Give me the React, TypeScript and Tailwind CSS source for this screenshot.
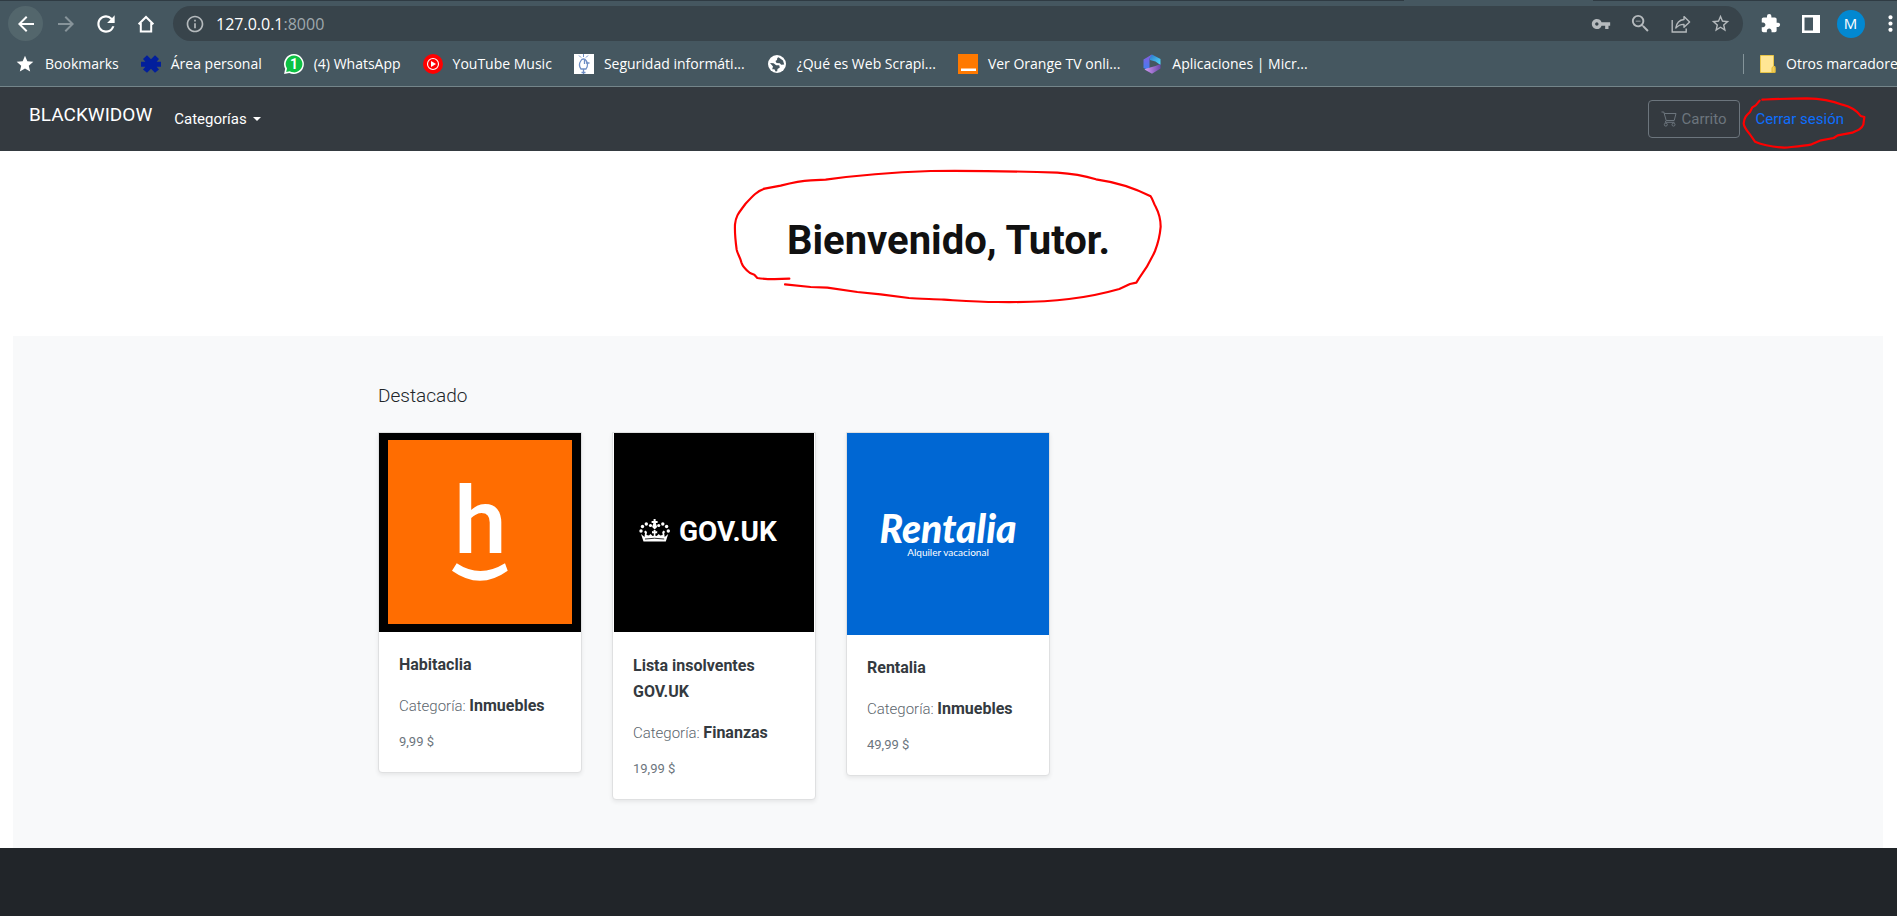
import type { ReactNode } from "react";
import {
  MdArrowBack,
  MdArrowForward,
  MdExtension,
  MdInfoOutline,
  MdMoreVert,
  MdRefresh,
  MdStar,
  MdStarBorder,
  MdVpnKey,
  MdZoomOut,
} from "react-icons/md";

/* ---------- Browser icons ---------- */

const HomeIcon = () => (
  <svg viewBox="0 0 18 18" className="h-[18px] w-[18px]" fill="none" stroke="currentColor" strokeWidth="2">
    <path d="M1.6 9.3 9 2l7.4 7.3M3.8 8v8.4h10.4V8" />
  </svg>
);

const ShareIcon = () => (
  <svg viewBox="0 0 20 18" className="h-[18px] w-5" fill="none" stroke="currentColor" strokeWidth="1.4">
    <path d="M1.2 5v12h14v-3.4" />
    <path d="M13 1.6 18.6 7 13 12.2V9.4C9.600 9.300 7 10.600 4.800 13 5.500 8.400 8.300 5 13 4.500Z" strokeLinejoin="round" />
  </svg>
);

const PanelIcon = () => (
  <svg viewBox="0 0 18 18" className="h-[18px] w-[18px]">
    <path fill="#fff" fillRule="evenodd" d="M0 0h18v18H0zM2.500 2.500v13H11v-13z" />
  </svg>
);

/* ---------- Bookmark icons ---------- */

const StarMark = () => <MdStar className="h-5 w-5 text-white" />;

const CampusMark = () => (
  <svg viewBox="0 0 20 20" className="h-5 w-5">
    <path
      fill="#021f9c"
      d="m2 5 4-3.800 4 4 4-4L18 5l-2.400 2.800H20v5h-4.400L18 15.600l-4 3.200-4-4-4 4-4-3.200 2.400-2.800H0v-5h4.400z"
    />
  </svg>
);

const WhatsAppMark = () => (
  <svg viewBox="0 0 20 20" className="h-5 w-5">
    <path fill="#fff" d="M10 0a10 10 0 1 1-4.700 18.900L.1 20l1.100-5.200A10 10 0 0 1 10 0z" />
    <path fill="#0dc143" d="M10 1.600a8.400 8.400 0 1 1-4.300 15.600l-3.500.700.800-3.400A8.400 8.400 0 0 1 10 1.600z" />
    <text x="10" y="14.800" textAnchor="middle" fill="#fff" fontSize="14" fontWeight="700" fontFamily="Roboto, sans-serif">
      1
    </text>
  </svg>
);

const MusicMark = () => (
  <svg viewBox="0 0 20 20" className="h-5 w-5">
    <circle cx="10" cy="10" r="10" fill="#f00" />
    <circle cx="10" cy="10" r="5.500" fill="none" stroke="#fff" strokeWidth="1.100" />
    <path fill="#fff" d="M8 7v6l5-3z" />
  </svg>
);

const SecurityMark = () => (
  <svg viewBox="0 0 20 20" className="h-5 w-5" fill="none" stroke="#6f8ec4">
    <path fill="#fff" stroke="none" d="M0 0h20v20H0z" />
    <path strokeWidth="1" d="M9.500 0v3M5 1.500l2 2M14 1.500l-2 2" />
    <path strokeWidth="1.300" d="M7 6.500c-2 3-2 6 0 8.500h5c2-3 2-6 0-8.500-1-2-4-2-5 0zM12 9h3.500M9.500 15v5M7.500 18.500h4M10.500 5v5" />
  </svg>
);

const GlobeMark = () => (
  <svg viewBox="0 0 20 20" className="h-5 w-5">
    <circle cx="10" cy="10" r="9" fill="#fff" />
    <path fill="#455760" d="M11.500 3.200 16 6.500l1.200 4-3 .300-1.400-1.600-3.300-.200-1-2 1.500-1 .300-2z" />
    <path fill="#455760" d="m3 9 3.600.300 2.600 2h3l.600 2.200-2.300 1.500-.300 2.300-1.600.300-1.200-2.400H5.200L6 12.600z" />
  </svg>
);

const OrangeMark = () => (
  <svg viewBox="0 0 20 20" className="h-5 w-5">
    <path fill="#ff7900" d="M0 0h20v20H0z" />
    <path fill="#fff" d="M3 14.500h15v2.500H3z" />
  </svg>
);

const OfficeMark = () => (
  <svg viewBox="0 0 20 20" className="h-5 w-5">
    <defs>
      <linearGradient id="of-a" x1="0" y1="0" x2="0" y2="1">
        <stop offset="0" stopColor="#8a5be0" />
        <stop offset="1" stopColor="#3f7ff0" />
      </linearGradient>
      <linearGradient id="of-b" x1="0" y1="0" x2="1" y2="1">
        <stop offset="0" stopColor="#2a6fc9" />
        <stop offset="1" stopColor="#52e0fb" />
      </linearGradient>
      <linearGradient id="of-c" x1="0" y1="0" x2="1" y2="0">
        <stop offset="0" stopColor="#d59bf5" />
        <stop offset="1" stopColor="#6a49a8" />
      </linearGradient>
    </defs>
    <path fill="url(#of-b)" d="M10 .500 18.500 5v6l-5-3.500L8 6l-1-3.500z" />
    <path fill="url(#of-a)" d="M10 .500 7.500 4v9.500L5 15.500 1.500 14V5.500z" />
    <path fill="url(#of-c)" d="M4.500 14.500 13.500 12 18.500 10v4.500L10 19.800 2.500 15.500z" />
  </svg>
);

const FolderMark = () => (
  <svg viewBox="0 0 20 20" className="h-5 w-5">
    <path fill="#ffe694" stroke="#e8c547" strokeWidth="1" d="M2.500 1.500h13v11h1.500v6H2.500z" />
    <path fill="#f5cf55" stroke="#e0b93a" strokeWidth="1" d="M14 18.500v-5l1.500-1 1.500 1v5z" />
  </svg>
);

const bookmarks: { label: string; icon: ReactNode }[] = [
  { label: "Bookmarks", icon: <StarMark /> },
  { label: "Área personal", icon: <CampusMark /> },
  { label: "(4) WhatsApp", icon: <WhatsAppMark /> },
  { label: "YouTube Music", icon: <MusicMark /> },
  { label: "Seguridad informáti...", icon: <SecurityMark /> },
  { label: "¿Qué es Web Scrapi...", icon: <GlobeMark /> },
  { label: "Ver Orange TV onli...", icon: <OrangeMark /> },
  { label: "Aplicaciones | Micr...", icon: <OfficeMark /> },
];

function ToolButton({ label, className = "", children }: { label: string; className?: string; children: ReactNode }) {
  return (
    <button
      type="button"
      aria-label={label}
      className={`flex h-[35px] w-[35px] shrink-0 items-center justify-center rounded-full ${className}`}
    >
      {children}
    </button>
  );
}

function Browser() {
  return (
    <div className="overflow-hidden border-b border-[#74858a] bg-[#455760] font-['Open_Sans',sans-serif] text-white">
      <div className="flex h-px">
        <div className="w-[74%] bg-[#2f3b43]" />
        <div className="w-[10%]" />
        <div className="flex-1 bg-[#2f3b43]" />
      </div>
      <div className="mt-[5px] flex items-center pl-2">
        <div className="flex gap-[5px]">
          <ToolButton label="Atrás" className="bg-[#53666c]">
            <MdArrowBack className="h-6 w-6" />
          </ToolButton>
          <ToolButton label="Adelante" className="text-[#87949a]">
            <MdArrowForward className="h-6 w-6" />
          </ToolButton>
          <ToolButton label="Recargar">
            <MdRefresh className="h-[26px] w-[26px]" />
          </ToolButton>
          <ToolButton label="Inicio">
            <HomeIcon />
          </ToolButton>
        </div>
        <div className="ml-[10px] flex h-[35px] min-w-0 flex-1 items-center rounded-full bg-[#38444b] pr-[5px] pl-3 text-[#b5babd]">
          <MdInfoOutline className="h-5 w-5 shrink-0" />
          <p className="ml-[11px] flex-1 text-base text-[#9fa8ad]">
            <span className="text-white">127.0.0.1</span>:8000
          </p>
          <div className="flex gap-[5px]">
            <ToolButton label="Contraseñas">
              <MdVpnKey className="h-5 w-5" />
            </ToolButton>
            <ToolButton label="Zoom">
              <MdZoomOut className="h-[23px] w-[23px]" />
            </ToolButton>
            <ToolButton label="Compartir">
              <ShareIcon />
            </ToolButton>
            <ToolButton label="Añadir a marcadores">
              <MdStarBorder className="h-[21px] w-[21px]" />
            </ToolButton>
          </div>
        </div>
        <div className="-mr-[11px] ml-[10px] flex gap-[5px]">
          <ToolButton label="Extensiones">
            <MdExtension className="h-[21px] w-[21px]" />
          </ToolButton>
          <ToolButton label="Panel lateral">
            <PanelIcon />
          </ToolButton>
          <ToolButton label="Perfil">
            <span className="flex h-7 w-7 items-center justify-center rounded-full bg-[#0288d1] text-[15px]">M</span>
          </ToolButton>
          <ToolButton label="Menú">
            <MdMoreVert className="h-[25px] w-[25px]" />
          </ToolButton>
        </div>
      </div>
      <nav aria-label="Marcadores" className="flex h-[45px] items-center pl-[15px] text-sm whitespace-nowrap">
        <ul className="flex gap-[22px]">
          {bookmarks.map((b) => (
            <li key={b.label}>
              <a href="#" className="flex items-center gap-[10px]">
                {b.icon}
                {b.label}
              </a>
            </li>
          ))}
        </ul>
        <a href="#" className="ml-auto flex h-5 w-[154px] items-center gap-2 border-l border-[#84949a] pl-[14px]">
          <span className="shrink-0">
            <FolderMark />
          </span>
          Otros marcadores
        </a>
      </nav>
    </div>
  );
}

/* ---------- Shop ---------- */

const CartIcon = () => (
  <svg viewBox="0 0 16 16" className="h-4 w-4" fill="none" stroke="currentColor" strokeWidth="1">
    <path d="M.5 1h2.300l2.400 8.500h8L15 2.500H3.300M5.200 9.500l-1 1.800h9.300" />
    <circle cx="4.800" cy="13.600" r="1.500" />
    <circle cx="12.500" cy="13.600" r="1.500" />
  </svg>
);

function Header() {
  return (
    <header className="flex h-16 items-center bg-[#343a40] pr-[41px] pl-[29px] text-white">
      <a href="#" className="mb-2 text-[19px] leading-6">
        BLACKWIDOW
      </a>
      <button type="button" className="ml-[22px] flex items-center gap-1.5 text-[15px]">
        Categorías
        <span className="border-x-4 border-t-4 border-x-transparent border-t-white" />
      </button>
      <div className="ml-auto flex items-center gap-1 text-[15px]">
        <button
          type="button"
          className="flex h-[38px] items-center gap-1 rounded border border-[#6c757d] px-3 text-[#6c757d]"
        >
          <CartIcon />
          Carrito
        </button>
        <a href="#" className="relative flex h-[38px] items-center px-3 text-[#0d6efd]">
          Cerrar sesión
          <svg
            viewBox="975 285 375 165"
            className="pointer-events-none absolute -top-[5px] -left-0.5 h-[55px] w-[125px]"
            fill="none"
            stroke="#f00"
            strokeWidth="6.500"
            strokeLinecap="round"
            strokeLinejoin="round"
          >
            <path d="M1036 299C1080 297 1120 295 1170 295C1215 296 1250 304 1276 314C1300 320 1320 332 1331 348L1342 351L1339 374C1334 386 1325 390 1306 398L1262 406L1250 414L1212 421L1184 433C1160 438 1130 440 1102 443C1070 441 1040 436 1014 425L998 402C988 390 981 382 980 370C982 352 988 346 999 336L1006 322L1016 316L1028 302" />
          </svg>
        </a>
      </div>
    </header>
  );
}

function Welcome() {
  return (
    <section className="relative flex h-[185px] items-center justify-center pb-1.5">
      <h1 className="text-[40px] leading-[48px] font-bold text-[#111]">Bienvenido, Tutor.</h1>
      <svg
        viewBox="-5 0 1380 480"
        className="pointer-events-none absolute top-1 left-1/2 h-[160px] w-[460px] -translate-x-1/2"
        fill="none"
        stroke="#f00"
        strokeWidth="6.500"
        strokeLinecap="round"
        strokeLinejoin="round"
      >
        <path d="M206 371C170 373 135 373 110 369L101 359L88 354C75 344 66 334 62 322C58 305 50 296 48 284C44 255 42 230 43 208C46 180 56 172 74 147C95 124 110 107 132 101L180 92C210 84 240 77 270 76L315 74C400 62 520 52 630 48C780 47 900 49 1010 53C1060 56 1090 62 1126 73C1190 82 1240 98 1290 124C1298 135 1299 146 1305 155C1314 172 1320 195 1320 215C1318 240 1314 260 1303 288C1290 318 1270 350 1255 370L1247 383L1228 387L1196 402C1140 418 1090 427 1045 432C980 440 900 442 830 441C770 441 720 437 670 434C630 432 590 431 565 429L480 418L410 411L320 398L270 396L193 388" />
      </svg>
    </section>
  );
}

function HabitacliaLogo() {
  return (
    <svg viewBox="0 0 202 199" className="block w-full bg-black" role="img" aria-label="Habitaclia">
      <path fill="#ff6d01" d="M9 7h184v184H9z" />
      <text x="75" y="120" fill="#fff" fontSize="93" fontWeight="700" fontFamily="Lato, sans-serif">
        h
      </text>
      <path fill="#fff" d="M77.700 130.300Q101 145.700 126 130.300L128.700 137.700Q101 157.700 73 137.700Z" />
    </svg>
  );
}

function GovLogo() {
  return (
    <svg viewBox="0 0 202 200" className="block w-full" role="img" aria-label="GOV.UK">
      <path d="M1 0h200v199H1z" />
      <g fill="#fff">
        <circle cx="28" cy="98" r="1.700" />
        <circle cx="29.500" cy="93.500" r="1.700" />
        <circle cx="33.300" cy="91" r="1.700" />
        <circle cx="37.500" cy="92.500" r="1.600" />
        <circle cx="45.700" cy="92.500" r="1.600" />
        <circle cx="49.800" cy="91" r="1.700" />
        <circle cx="53.600" cy="93.500" r="1.700" />
        <circle cx="55.300" cy="98" r="1.700" />
        <path d="M40.600 86h2v2h2v2h-1.800l1.300 4-2.500 2.500-2.500-2.500 1.300-4h-1.800v-2h2z" />
        <path d="M28 101l3.500 3 .500-4-1-1 1.500-1.500L34 99l-.500 3 2.500.500 1.500-1.500 2 2 1.500-.500-.500-2.500-1.500.500v-2.500l1.500.500.200-1.500h1.800l.200 1.500 1.500-.500v2.500l-1.500-.500-.500 2.500 1.500.500 2-2 1.500 1.500L49.700 102l-.500-3 1.500-1.500L52.200 99l-1 1 .500 4 3.500-3-2.400 7.500H30.500z" />
      </g>
      <path d="M32 106q9.600-1.500 19.200 0" fill="none" stroke="#000" strokeWidth=".8" />
      <text x="66" y="108" fill="#fff" fontSize="28" fontWeight="700" fontFamily="Roboto, sans-serif">
        GOV.UK
      </text>
    </svg>
  );
}

function RentaliaLogo() {
  return (
    <svg viewBox="0 0 202 202" className="block w-full bg-[#0067d3]" role="img" aria-label="Rentalia">
      <g fill="#fff" textAnchor="middle" fontFamily="Lato, sans-serif">
        <text x="101" y="110" fontSize="39" fontWeight="900" fontStyle="italic">
          Rentalia
        </text>
        <text x="101" y="123" fontSize="10">
          Alquiler vacacional
        </text>
      </g>
    </svg>
  );
}

const products = [
  { name: "Habitaclia", category: "Inmuebles", price: "9,99 $", logo: <HabitacliaLogo /> },
  { name: "Lista insolventes GOV.UK", category: "Finanzas", price: "19,99 $", logo: <GovLogo /> },
  { name: "Rentalia", category: "Inmuebles", price: "49,99 $", logo: <RentaliaLogo /> },
];

function Featured() {
  return (
    <main className="mr-[14px] ml-[13px] bg-[#f8f9fa] py-12">
      <div className="mx-auto max-w-[1140px]">
        <h2 className="text-[19px] leading-6 font-light text-[#212529]">Destacado</h2>
        <ul className="mt-6 flex flex-wrap items-start gap-[30px]">
          {products.map((p) => (
            <li
              key={p.name}
              className="w-[204px] overflow-hidden rounded-b border border-[#dfe0e1] bg-white shadow-[0_2px_4px_rgba(0,0,0,0.075)]"
            >
              {p.logo}
              <div className="p-5">
                <h3 className="leading-[26px] font-bold text-[#343a40]">{p.name}</h3>
                <p className="mt-[15px] text-[15px] leading-[26px] font-light text-[#5c656d]">
                  Categoría: <strong className="text-base leading-[26px] font-bold text-[#343a40]">{p.category}</strong>
                </p>
                <p className="mt-[13px] text-[13px] leading-5 text-[#6c757d]">{p.price}</p>
              </div>
            </li>
          ))}
        </ul>
      </div>
    </main>
  );
}

export default function App() {
  return (
    <div className="flex min-h-screen flex-col bg-white font-['Roboto',sans-serif]">
      <Browser />
      <Header />
      <Welcome />
      <Featured />
      <footer className="min-h-[64px] flex-1 bg-[#212529]" />
    </div>
  );
}
